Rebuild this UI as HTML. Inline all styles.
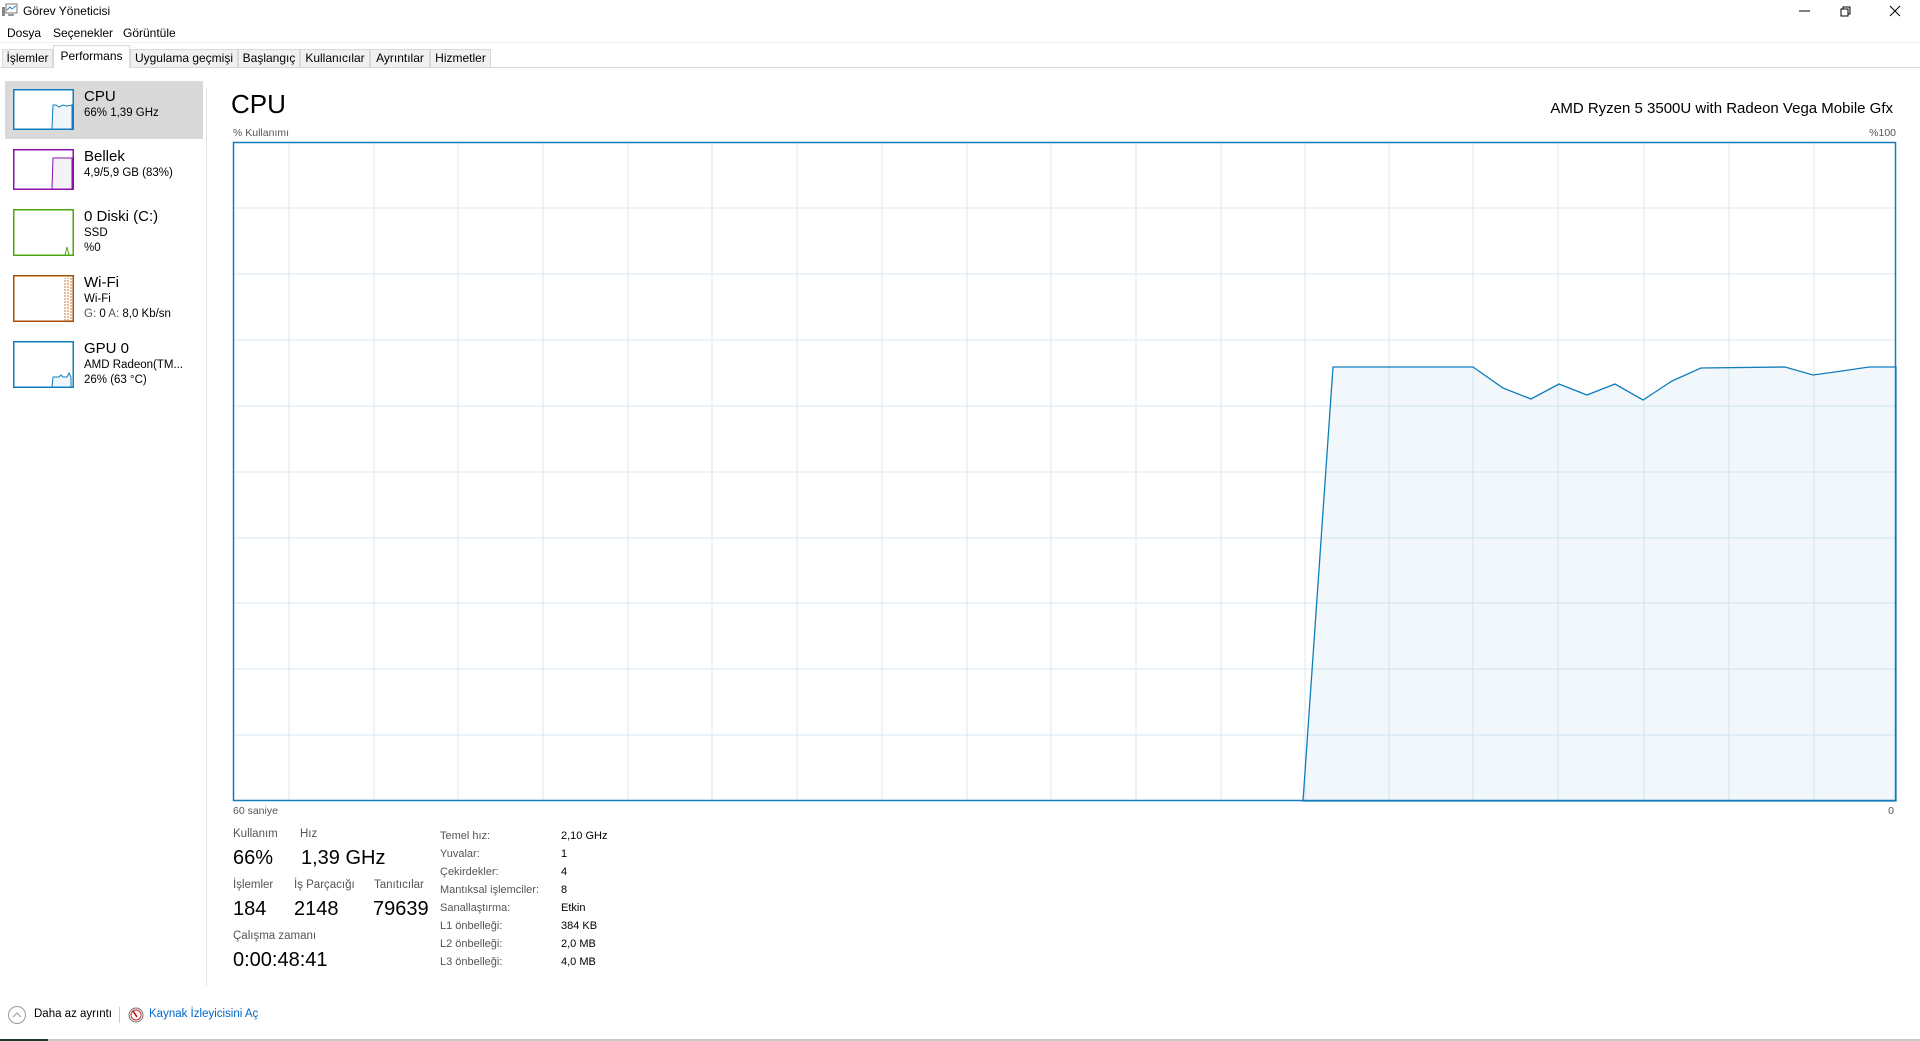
<!DOCTYPE html>
<html><head><meta charset="utf-8"><style>
*{margin:0;padding:0;box-sizing:border-box}
body{width:1920px;height:1041px;background:#fff;font-family:"Liberation Sans",sans-serif;color:#000;position:relative;overflow:hidden;font-size:12px}
.a{position:absolute;white-space:nowrap}
.tab{position:absolute;top:49px;height:18px;background:#f0f0f0;border:1px solid #d9d9d9;border-bottom:none;font-size:12px;line-height:17px;text-align:center}
.g{color:#555}
.lbl{color:#555;font-size:11.5px}
.big{font-size:20px}
</style></head><body>
<svg class="a" style="left:2px;top:3px" width="16" height="14" viewBox="0 0 16 14"><rect x="4" y="1" width="11" height="9" fill="#fff" stroke="#777"/><path d="M5 7 L8 4 L10 6 L14 3" stroke="#2a7fcf" fill="none"/><rect x="0" y="4" width="3" height="9" fill="#888"/><rect x="6" y="11" width="6" height="2" fill="#999"/></svg>
<div class="a" style="left:23px;top:4px;font-size:12px">Görev Yöneticisi</div>
<svg class="a" style="left:1795px;top:4px" width="115" height="14"><line x1="4" y1="7" x2="15" y2="7" stroke="#000"/><rect x="46" y="5" width="7" height="7" fill="none" stroke="#000"/><path d="M48 5V3h7v7h-2" fill="none" stroke="#000"/><path d="M95 2l10 10M105 2l-10 10" stroke="#000"/></svg>
<div class="a" style="left:7px;top:26px">Dosya</div>
<div class="a" style="left:53px;top:26px">Seçenekler</div>
<div class="a" style="left:123px;top:26px">Görüntüle</div>
<div class="a" style="left:0;top:42px;width:1920px;height:1px;background:#f0f0f0"></div>
<div class="a" style="left:0;top:67px;width:1920px;height:1px;background:#d9d9d9"></div>
<div class="tab" style="left:2px;width:51px">İşlemler</div>
<div class="tab" style="left:53px;width:77px;top:45px;height:23px;background:#fff;line-height:20px">Performans</div>
<div class="tab" style="left:130px;width:108px">Uygulama geçmişi</div>
<div class="tab" style="left:238px;width:62px">Başlangıç</div>
<div class="tab" style="left:300px;width:70px">Kullanıcılar</div>
<div class="tab" style="left:370px;width:60px">Ayrıntılar</div>
<div class="tab" style="left:430px;width:61px">Hizmetler</div>

<div class="a" style="left:5px;top:81px;width:198px;height:58px;background:#d9d9d9"></div>
<div class="a" style="left:206px;top:88px;width:1px;height:898px;background:#e5e5e5"></div>
<svg class="a" style="left:13px;top:89px" width="62" height="42"><rect x="0.75" y="0.75" width="59.5" height="39.5" fill="#fff" stroke="#117dbb" stroke-width="1.5"/><path d="M39 40 L40 16 L43 16 L46 18 L50 16 L54 17 L59 16 V40Z" fill="#f1f6fa" stroke="#117dbb"/></svg>
<div class="a" style="left:84px;top:88px;font-size:15px">CPU</div>
<div class="a" style="left:84px;top:107px;font-size:11.5px">66% 1,39 GHz</div>

<svg class="a" style="left:13px;top:149px" width="62" height="42"><rect x="0.75" y="0.75" width="59.5" height="39.5" fill="#fff" stroke="#8b12ae" stroke-width="1.5"/><path d="M39 40 L40 9 L59 9 V40Z" fill="#f4f2f4" stroke="#8b12ae"/></svg>
<div class="a" style="left:84px;top:148px;font-size:15px">Bellek</div>
<div class="a" style="left:84px;top:167px;font-size:11.5px">4,9/5,9 GB (83%)</div>

<svg class="a" style="left:13px;top:209px" width="62" height="48"><rect x="0.75" y="0.75" width="59.5" height="45.5" fill="#fff" stroke="#4da60c" stroke-width="1.5"/><path d="M52 46 L54 38 L56 46" fill="none" stroke="#4da60c"/></svg>
<div class="a" style="left:84px;top:208px;font-size:15px">0 Diski (C:)</div>
<div class="a" style="left:84px;top:227px;font-size:11.5px">SSD</div>
<div class="a" style="left:84px;top:242px;font-size:11.5px">%0</div>

<svg class="a" style="left:13px;top:275px" width="62" height="48"><rect x="0.75" y="0.75" width="59.5" height="45.5" fill="#fff" stroke="#a74f01" stroke-width="1.5"/><path d="M52 46 V3 M55 46 V3 M58 3 V46" stroke="#c8733a" stroke-dasharray="2 1"/></svg>
<div class="a" style="left:84px;top:274px;font-size:15px">Wi-Fi</div>
<div class="a" style="left:84px;top:293px;font-size:11.5px">Wi-Fi</div>
<div class="a" style="left:84px;top:308px;font-size:11.5px"><span class="g">G:</span> 0 <span class="g">A:</span> 8,0 Kb/sn</div>

<svg class="a" style="left:13px;top:341px" width="62" height="48"><rect x="0.75" y="0.75" width="59.5" height="45.5" fill="#fff" stroke="#117dbb" stroke-width="1.5"/><path d="M39 46 L40 36 L46 36 L48 34 L50 36 L54 36 L56 32 L58 36 V46Z" fill="#f1f6fa" stroke="#117dbb"/></svg>
<div class="a" style="left:84px;top:340px;font-size:15px">GPU 0</div>
<div class="a" style="left:84px;top:359px;font-size:11.5px">AMD Radeon(TM...</div>
<div class="a" style="left:84px;top:374px;font-size:11.5px">26% (63 °C)</div>

<div class="a" style="left:231px;top:89px;font-size:26px">CPU</div>
<div class="a" style="right:27px;top:100px;font-size:15px">AMD Ryzen 5 3500U with Radeon Vega Mobile Gfx</div>
<div class="a g" style="left:233px;top:127px;font-size:10.5px">% Kullanımı</div>
<div class="a g" style="right:24px;top:127px;font-size:10.5px">%100</div>

<svg class="a" style="left:0;top:0" width="1920" height="820">
<g stroke="#d9eaf4" stroke-width="1">
<path d="M289 142V801M374 142V801M458 142V801M543 142V801M628 142V801M712 142V801M797 142V801M882 142V801M967 142V801M1051 142V801M1136 142V801M1221 142V801M1305 142V801M1389 142V801M1473 142V801M1558 142V801M1644 142V801M1729 142V801M1814 142V801"/>
<path d="M233 208H1896M233 274H1896M233 340H1896M233 406H1896M233 472H1896M233 538H1896M233 603H1896M233 669H1896M233 735H1896"/>
</g>
<path d="M1303 801 L1333 367 L1473 367 L1503 388 L1531 399 L1559 384 L1587 395 L1615 384 L1643 400 L1672 381 L1701 368 L1785 367 L1813 375 L1842 371 L1869 367 L1896 367 L1896 801Z" fill="rgba(17,125,187,0.06)" stroke="#117dbb" stroke-width="1.3"/>
<rect x="233.5" y="142.5" width="1662" height="658" fill="none" stroke="#117dbb" stroke-width="1.5"/>
</svg>
<div class="a g" style="left:233px;top:805px;font-size:10.5px">60 saniye</div>
<div class="a g" style="right:26px;top:805px;font-size:10.5px">0</div>

<div class="a lbl" style="left:233px;top:828px">Kullanım</div>
<div class="a lbl" style="left:300px;top:828px">Hız</div>
<div class="a big" style="left:233px;top:847px">66%</div>
<div class="a big" style="left:301px;top:847px">1,39 GHz</div>
<div class="a lbl" style="left:233px;top:879px">İşlemler</div>
<div class="a lbl" style="left:294px;top:879px">İş Parçacığı</div>
<div class="a lbl" style="left:374px;top:879px">Tanıtıcılar</div>
<div class="a big" style="left:233px;top:898px">184</div>
<div class="a big" style="left:294px;top:898px">2148</div>
<div class="a big" style="left:373px;top:898px">79639</div>
<div class="a lbl" style="left:233px;top:930px">Çalışma zamanı</div>
<div class="a big" style="left:233px;top:949px">0:00:48:41</div>

<div class="a lbl" style="left:440px;top:827px;line-height:18px;font-size:11px">Temel hız:<br>Yuvalar:<br>Çekirdekler:<br>Mantıksal işlemciler:<br>Sanallaştırma:<br>L1 önbelleği:<br>L2 önbelleği:<br>L3 önbelleği:</div>
<div class="a" style="left:561px;top:827px;line-height:18px;font-size:11px">2,10 GHz<br>1<br>4<br>8<br>Etkin<br>384 KB<br>2,0 MB<br>4,0 MB</div>

<svg class="a" style="left:7px;top:1005px" width="20" height="20"><circle cx="10" cy="10" r="8.5" fill="none" stroke="#999"/><path d="M6 12 L10 8 L14 12" fill="none" stroke="#999"/></svg>
<div class="a" style="left:34px;top:1008px;font-size:11.5px">Daha az ayrıntı</div>
<div class="a" style="left:119px;top:1007px;width:1px;height:16px;background:#ccc"></div>
<svg class="a" style="left:128px;top:1007px" width="16" height="16"><circle cx="8" cy="8" r="7" fill="#f3ece6" stroke="#777"/><circle cx="8" cy="8" r="5" fill="#fff" stroke="#c33"/><path d="M5 4 L9 10" stroke="#c00" stroke-width="1.5"/></svg>
<div class="a" style="left:149px;top:1008px;color:#0066cc;font-size:11.5px">Kaynak İzleyicisini Aç</div>
<div class="a" style="left:0;top:1039px;width:48px;height:2px;background:#1f3a33"></div>
<div class="a" style="left:48px;top:1039px;width:1872px;height:2px;background:#c8c8c8"></div>
</body></html>
